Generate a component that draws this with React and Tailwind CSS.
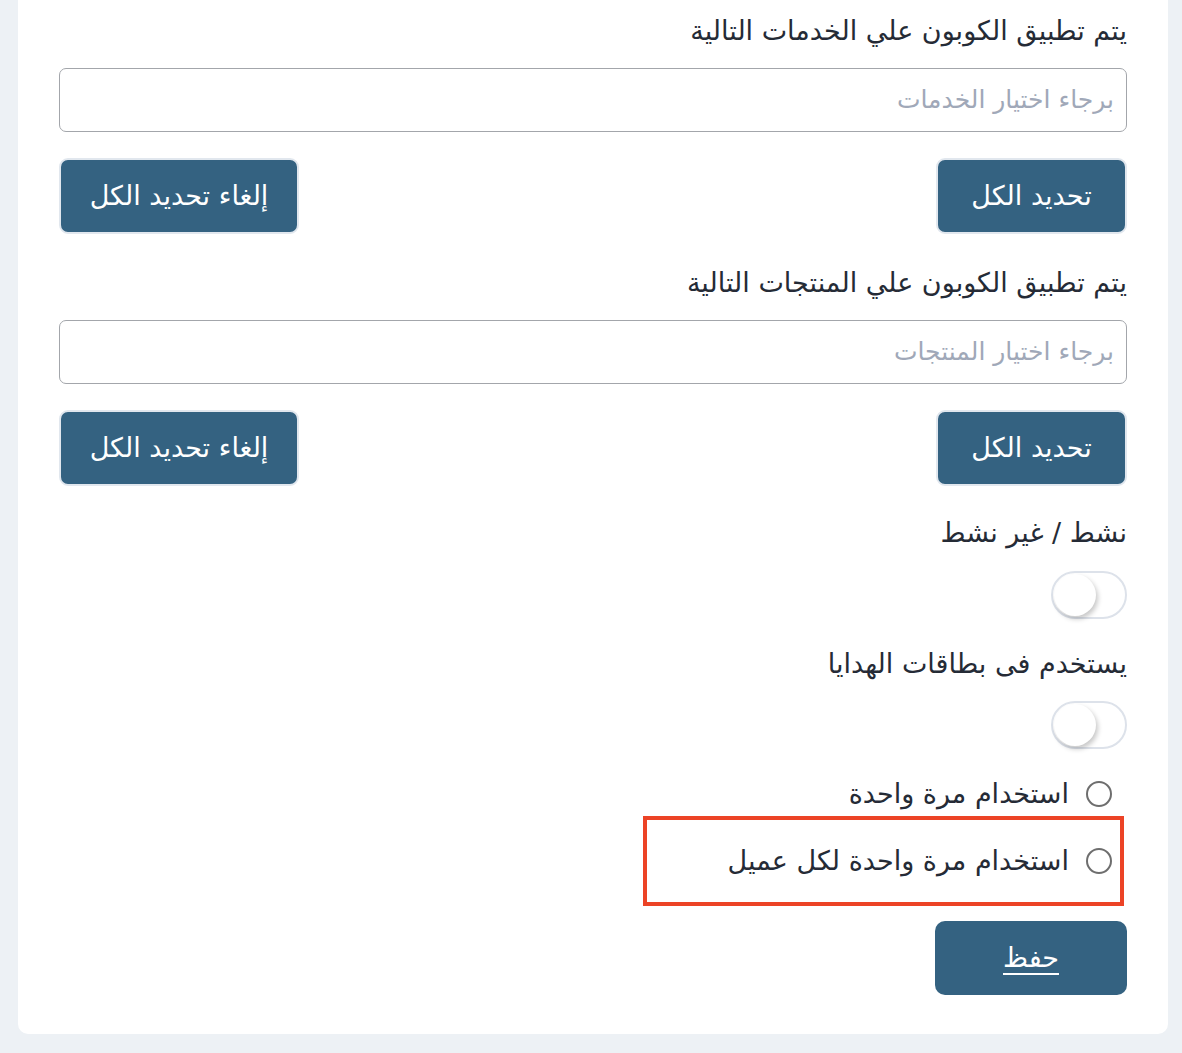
import React from "react";

const font = { fontFamily: '"DejaVu Sans", "Noto Sans", sans-serif' };

function Label({ children, className = "" }) {
  return (
    <div className={"text-[27px] leading-[36px] text-[#252b36] " + className}>
      {children}
    </div>
  );
}

function SelectBox({ placeholder }) {
  return (
    <div className="h-[64px] w-full rounded-[7px] border-[1.5px] border-[#a3a6ab] bg-white flex items-center px-[12px]">
      <span className="text-[25px] text-[#a0a8b8]">{placeholder}</span>
    </div>
  );
}

function Btn({ children, w }) {
  return (
    <button
      className={
        "h-[76px] rounded-[9px] border-2 border-[#e1e7ee] bg-[#346281] text-white text-[27px] " +
        w
      }
    >
      {children}
    </button>
  );
}

function Toggle() {
  return (
    <div className="relative h-[48px] w-[76px] rounded-full border-2 border-[#dde2ea] bg-white">
      <div className="absolute left-[1px] top-[1px] h-[42px] w-[42px] rounded-full bg-white shadow-[2px_3px_5px_rgba(0,0,0,0.22)]" />
    </div>
  );
}

function Radio({ children }) {
  return (
    <div className="flex items-center gap-[17px] h-[36px]">
      <span className="h-[26px] w-[26px] rounded-full border-2 border-[#6e6e6e] bg-white shrink-0" />
      <span className="text-[27px] leading-[36px] text-[#252b36]">{children}</span>
    </div>
  );
}

export default function App() {
  return (
    <div className="min-h-[1053px] bg-[#edf1f5]" style={font}>
      <div
        dir="rtl"
        className="ml-[18px] mr-[14px] bg-white rounded-b-[10px] px-[41px] pt-[13px] pb-[39px]"
      >
        <Label>يتم تطبيق الكوبون علي الخدمات التالية</Label>
        <div className="mt-[19px]">
          <SelectBox placeholder="برجاء اختيار الخدمات" />
        </div>
        <div className="mt-[26px] flex justify-between">
          <Btn w="w-[191px]">تحديد الكل</Btn>
          <Btn w="w-[240px]">إلغاء تحديد الكل</Btn>
        </div>

        <Label className="mt-[31px]">يتم تطبيق الكوبون علي المنتجات التالية</Label>
        <div className="mt-[19px]">
          <SelectBox placeholder="برجاء اختيار المنتجات" />
        </div>
        <div className="mt-[26px] flex justify-between">
          <Btn w="w-[191px]">تحديد الكل</Btn>
          <Btn w="w-[240px]">إلغاء تحديد الكل</Btn>
        </div>

        <Label className="mt-[29px]">نشط / غير نشط</Label>
        <div className="mt-[20px]">
          <Toggle />
        </div>

        <Label className="mt-[27px]">يستخدم فى بطاقات الهدايا</Label>
        <div className="mt-[19px]">
          <Toggle />
        </div>

        <div className="mt-[27px] pr-[15px]">
          <Radio>استخدام مرة واحدة</Radio>
        </div>
        <div className="mt-[4px] mr-[3px] w-[481px] h-[90px] border-4 border-[#ec4326] flex items-center pr-[8px]">
          <Radio>استخدام مرة واحدة لكل عميل</Radio>
        </div>

        <div className="mt-[15px]">
          <button className="h-[74px] w-[192px] rounded-[10px] bg-[#346281] text-white text-[27px] underline underline-offset-[6px]">
            حفظ
          </button>
        </div>
      </div>
    </div>
  );
}
